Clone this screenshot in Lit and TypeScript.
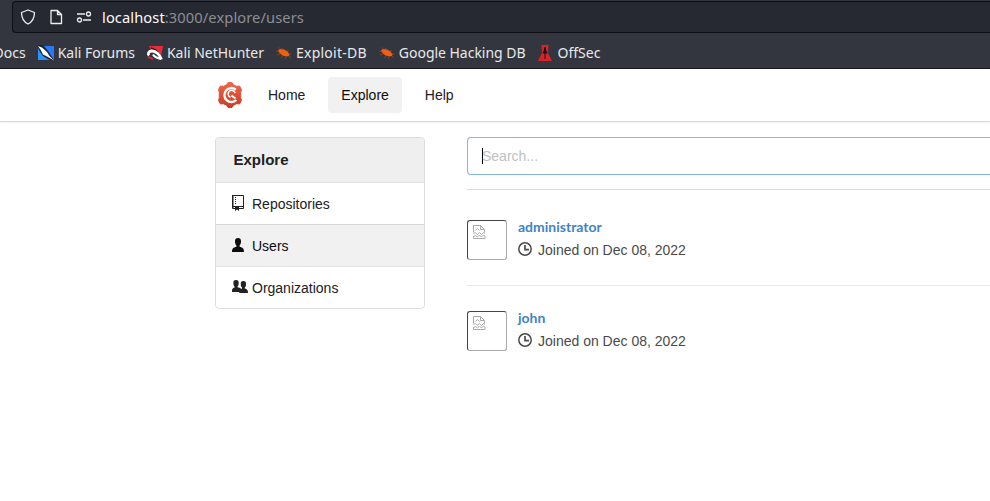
import { LitElement, html, css, svg } from "lit";
import { customElement } from "lit/decorators.js";
import { classMap } from "lit/directives/class-map.js";

const bug = html`<svg class="fav" viewBox="0 0 16 16"><g fill="none" stroke="#a34a20" stroke-width=".7"><path d="M5 5 3 2.500M8 5 6 3M11 7l1.500-2M13 9h2.500M4 9 1 10M7 11l-2 2M10 12l-1 2M13 11l2 2M3 7 0 6"/></g><path fill="#ee5f12" d="m2 5 2.500-1 4 .8 3 1.700 2 3-.5 1.500-3 .5-3.500-1L3.500 8z"/></svg>`;

const kali = html`<svg class="fav" viewBox="0 0 16 16"><path fill="#2777ff" d="M3 1h13v14H0V4z"/><path fill="#2496ff" d="M0 5 9 15H0z"/><path fill="#20232b" d="M0 0h5l5 6 6 9h-4L5 11 1 5z"/><path fill="#fff" d="m0 1 4 1.500 5 4.500 2.500 4 4.500 4.500-7-4-4-2-2-4z"/></svg>`;

const nether = html`<svg class="fav" viewBox="0 0 16 16"><path fill="#ed2939" d="M2 1h14l-2 11-5-5-5-1z"/><path fill="none" stroke="#22242a" stroke-width="1.500" d="m4 3 5 2 4 5"/><path fill="none" stroke="#fff" stroke-width="2.800" d="M14.500 14.500C13 10 9 6 5 6 1.500 6 .5 9 2 10.500"/><path fill="none" stroke="#fff" stroke-width="2" d="M6 9.500C8 13 11 13 14 14"/><path stroke="#ed2939" stroke-width="1.800" d="m1 12 5 2"/></svg>`;

const offsec = html`<svg class="fav" viewBox="0 0 16 16"><path fill="#d8232c" d="M4.500 0h7l-.5 8 4 8H1l4-8z"/><path fill="#251014" d="M7 2h2v3l1.500 3-2 1v5h-1V9l-2-1L7 5z"/></svg>`;

const glyphs = {
  repo: svg`<path d="M1.500.5h11v11h-11zM1.500 11.500v2H4m4 0h4.500v-2M1.500 11.500h11" fill="none" stroke="currentColor"/><path d="M1 0h1.500v13H1zM4 12h4v4l-2-1.500L4 16z"/><path d="M4.500 2v8" stroke="currentColor" stroke-dasharray="1 1"/>`,
  user: svg`<path d="M7 0C4.700 0 3.800 1.500 4 3.800c.1 2 .6 3 1.400 3.700v1.200C2.300 9.500 1 10.200 1 14h12c0-3.800-1.300-4.500-4.400-5.300V7.500c.8-.7 1.300-1.700 1.400-3.700C10.200 1.500 9.300 0 7 0z"/>`,
  team: svg`<path d="M5 0C3 0 2.200 1.200 2.400 3.200c.1 1.700.4 2.700 1.200 3.300v1C1.500 8.200 1 8.800 1 12h7.200v1H17c0-3-.7-3.700-3.200-4.500v-1c.8-.6 1.100-1.600 1.200-3.300C15.200 2.200 14.400 1 12.400 1S9.600 2.200 9.800 4.200c.1 1.700.4 2.700 1.200 3.300v1l-1 .4C9.500 8 8.600 7.800 6.500 7.300v-.8c.8-.6 1.100-1.600 1.200-3.300C7.900 1.200 7 0 5 0z"/>`,
};

const clock = html`<svg class="clock" viewBox="0 0 14 14"><circle cx="7" cy="7" r="6.200" fill="none" stroke="currentColor" stroke-width="1.500"/><path d="M7 3v4.700h4" fill="none" stroke="currentColor" stroke-width="1.700"/></svg>`;

const broken = html`<svg class="broken" viewBox="0 0 14 14"><path d="M.5 7.500v-7h7l4 4v3M7.500.5v4h4M.5 8.500l2-1 2 2 2-2 2 2 2-2 1.500 1M2.500 5.500l2-2 2 2M.5 11.500l2-1 2 1.500 2-2 2 2 2-2 1.500 1M.5 11v2.500H12V11" fill="none" stroke="#aaa"/></svg>`;

@customElement("app-root")
export class AppRoot extends LitElement {
  static styles = css`
    :host { display: block; height: 501px; overflow: hidden; background: #fff; color: #212121; font: 14px/20px "Liberation Sans", Arial, sans-serif; }
    * { box-sizing: border-box; }
    svg { display: block; flex: none; overflow: visible; }
    .chrome { height: 69px; background: #33363e; border-bottom: 1px solid #07080b; font-family: "Noto Sans", sans-serif; white-space: nowrap; }
    .top { padding-top: 1px; }
    .address { height: 32px; margin-left: 12px; border: 1px solid #0d0f14; border-right: 0; border-radius: 4px 0 0 4px; background: #272932; display: flex; align-items: center; padding: 0 0 0 7px; }
    .address svg { width: 16px; height: 16px; margin-right: 12px; stroke: #eceef0; fill: none; stroke-width: 1.300; }
    .url { color: #8c8e94; font-size: 14.670px; letter-spacing: .1px; margin-left: -2px; }
    .url b { font-weight: 400; color: #fbfbfe; }
    .marks { height: 35px; display: flex; align-items: center; padding-top: 5px; color: #e8e9eb; font-size: 14px; }
    .mark { display: flex; align-items: center; gap: 4px; margin-right: 12px; }
    .mark.loose { letter-spacing: .25px; }
    .mark.tight { letter-spacing: -.03px; }
    .docs { margin: 0 12px 0 -6.500px; }
    .fav { width: 16px; height: 16px; }
    .nav { height: 53px; border-bottom: 1px solid #d9dadb; box-shadow: 0 1px 2px #f1f1f1; display: flex; align-items: center; padding-left: 217px; }
    .logo { width: 26px; height: 26px; margin-right: 12px; }
    .nav a { height: 36px; padding: 8px 13px; border-radius: 4px; margin-right: 10px; }
    .nav a.active { background: #f1f1f1; color: #0d0d0d; }
    .page { display: grid; grid-template-columns: 210px 523px; gap: 42px; padding: 15px 0 0 215px; }
    .menu { border: 1px solid #dcddde; border-radius: 4px; overflow: hidden; height: 172px; }
    .menu h4 { margin: 0; height: 44px; padding: 12px 17.500px; font-size: 15px; background: #efefef; }
    .item { display: flex; align-items: center; height: 42px; padding-left: 15px; border-top: 1px solid #e2e2e3; }
    .item.active { background: #f1f1f1; color: #0d0d0d; border-top-color: #d6d6d7; }
    .glyph { width: 16px; height: 16px; margin: 1px 5px 0 0; fill: currentColor; }
    .glyph.repo { margin-top: -1px; }
    .search { height: 38px; border: 1px solid #85b7d9; border-right: 0; border-radius: 4px 0 0 4px; display: flex; align-items: center; padding-left: 14px; color: #bfbfbf; }
    .caret { width: 1px; height: 16px; background: #000; margin-right: -1px; }
    .rule { height: 1px; background: #d9dadb; margin-top: 14px; }
    .person { display: flex; height: 90px; padding-top: 25px; margin-top: 5px; gap: 11px; }
    .person + .person { margin-top: 0; border-top: 1px solid #e8e8e9; }
    .avatar { width: 40px; height: 40px; border: 1px solid #aaa; border-top-color: #444; border-left-color: #444; border-radius: 3px; padding: 4px 5px; }
    .broken { width: 14px; height: 14px; }
    .name { color: #4183c4; font: 700 14px/16px Lato, sans-serif; margin-top: -1px; }
    .meta { display: flex; align-items: center; gap: 6px; color: #4a4a4a; margin-top: 5px; }
    .clock { width: 14px; height: 14px; margin-top: -2px; }
  `;

  render() {
    const marks = [
      { icon: kali, label: "Kali Forums", fit: "" },
      { icon: nether, label: "Kali NetHunter", fit: "tight" },
      { icon: bug, label: "Exploit-DB", fit: "loose" },
      { icon: bug, label: "Google Hacking DB", fit: "tight" },
      { icon: offsec, label: "OffSec", fit: "" },
    ];
    const items = [
      { kind: "repo", icon: glyphs.repo, label: "Repositories" },
      { kind: "user", icon: glyphs.user, label: "Users" },
      { kind: "team", icon: glyphs.team, label: "Organizations" },
    ];
    return html`
      <header class="chrome">
        <div class="top"><div class="address">
          <svg viewBox="0 0 16 16"><path d="M8 1 14.500 3.500C14.500 9 12 13 8 15 4 13 1.500 9 1.500 3.500z" stroke-linejoin="round"/></svg>
          <svg viewBox="0 0 16 16"><path d="M3 1.500h6.500l4 4v9H3zM9.500 1.500v4h4" stroke-linejoin="round"/></svg>
          <svg viewBox="0 0 16 16"><path d="M1 5h8M7 11h8"/><circle cx="12.500" cy="5" r="2"/><circle cx="3.500" cy="11" r="2"/></svg>
          <span class="url"><b>localhost</b>:3000/explore/users</span>
        </div></div>
        <div class="marks"><span class="docs">Docs</span>${marks.map((m) => html`<span class="mark ${m.fit}">${m.icon}<span>${m.label}</span></span>`)}</div>
      </header>
      <nav class="nav">
        <svg class="logo" viewBox="0 0 26 26">
          <defs><linearGradient id="red" x2="0" y2="1"><stop stop-color="#f0664b"/><stop offset="1" stop-color="#c63e25"/></linearGradient></defs>
          <path fill="url(#red)" stroke="url(#red)" stroke-linejoin="round" d="M11 .5h4l1.500 2.300 3 1.500 3-.3 2 3.500-.8 2.700v5.600l.8 2.700-2 3.500-3-.3-3 1.500-1.500 2.300h-4l-1.500-2.300-3-1.500-3 .3-2-3.500.8-2.700v-5.600L1.500 7.500l2-3.500 3 .3 3-1.500z"/>
          <path fill="none" stroke="#fff" stroke-width="2.300" d="M18.800 7.600A7 7 0 1 0 19.300 18"/><path fill="none" stroke="#fff" stroke-width="1.500" d="M18.200 11A3.600 3.600 0 1 0 13.500 15.300"/><path stroke="#fff" stroke-width="2" d="m14.500 13.500 4 3"/>
        </svg>
        <a>Home</a><a class="active">Explore</a><a>Help</a>
      </nav>
      <main class="page">
        <aside class="menu"><h4>Explore</h4>${items.map((it, i) => html`<div class=${classMap({ item: true, active: i === 1 })}><svg class="glyph ${it.kind}" viewBox="0 0 16 16">${it.icon}</svg><span>${it.label}</span></div>`)}</aside>
        <section>
          <div class="search"><span class="caret"></span>Search...</div>
          <div class="rule"></div>
          ${["administrator", "john"].map((n) => html`<article class="person"><div class="avatar">${broken}</div><div><div class="name">${n}</div><div class="meta">${clock}<span>Joined on Dec 08, 2022</span></div></div></article>`)}
        </section>
      </main>`;
  }
}
